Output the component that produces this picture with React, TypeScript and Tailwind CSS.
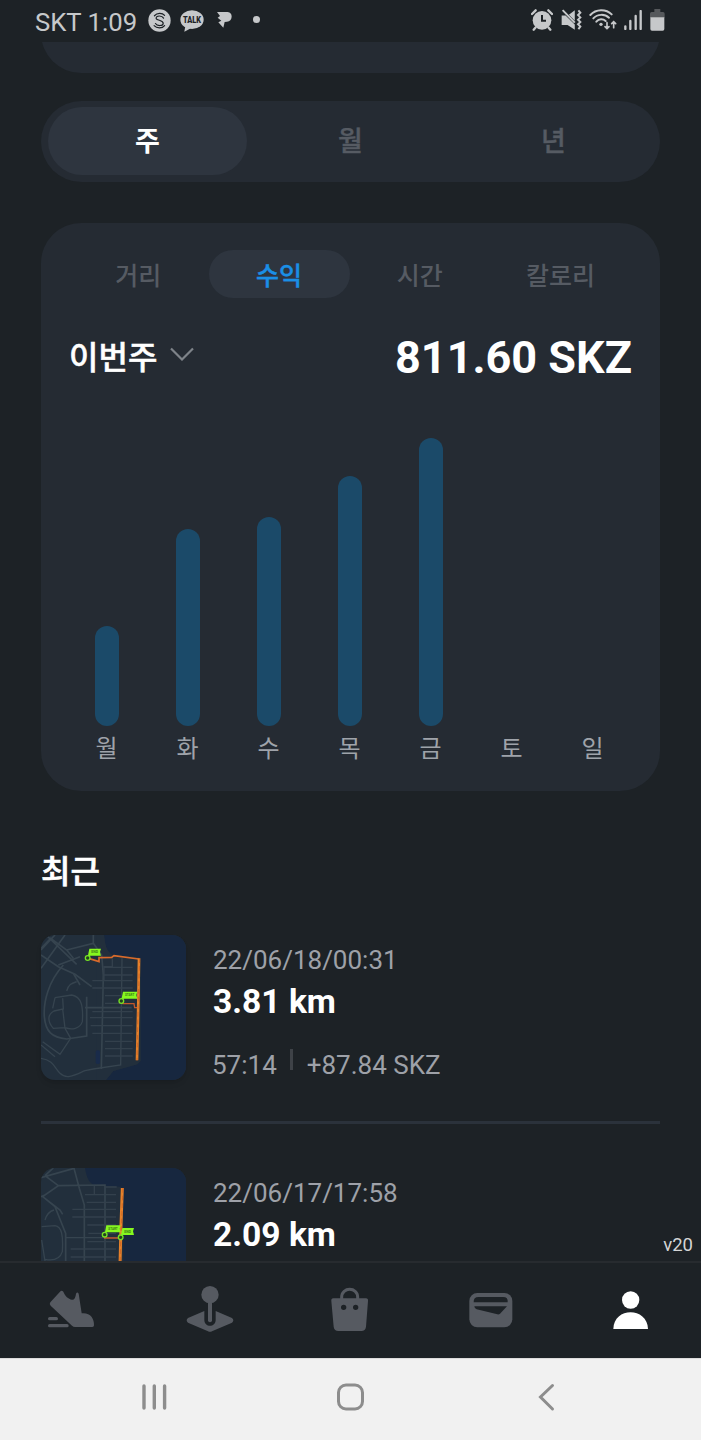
import { useState } from "react";
import type { ReactNode } from "react";

const days = [
  { label: "월", height: 100 },
  { label: "화", height: 197 },
  { label: "수", height: 209 },
  { label: "목", height: 250 },
  { label: "금", height: 288 },
  { label: "토", height: 0 },
  { label: "일", height: 0 },
];

const periods = ["주", "월", "년"];
const metrics = ["거리", "수익", "시간", "칼로리"];

function StatusBar() {
  return (
    <header className="flex h-[42px] shrink-0 items-center justify-between pl-[35px] pr-[36px] text-[#c6c8ca]">
      <div className="flex items-center">
        <span className="w-[113px] whitespace-nowrap pt-[1px] text-[25.7px] leading-[42px]">SKT 1:09</span>
        <svg className="h-[23px] w-[23px] -mt-[1px]" viewBox="0 0 68 68">
          <circle cx="34" cy="34" r="33" fill="#c6c8ca" />
          <g fill="none" stroke="#1d2226" strokeWidth="3.5" strokeLinecap="round">
            <path d="M19 20C27 11 42 11 49 19" />
            <path d="M46 27C42 19 24 18 24 27C24 34 45 33 45 42C45 51 27 51 22 43" />
            <path d="M18 49C26 58 42 58 49 49" />
          </g>
        </svg>
        <svg className="-mt-[1px] ml-[9px] h-[22px] w-[24px]" viewBox="0 0 72 66">
          <ellipse cx="36" cy="29" rx="35" ry="28" fill="#c6c8ca" />
          <path d="M16 48L13 65L34 54Z" fill="#c6c8ca" />
          <text x="36" y="38" fill="#1d2226" fontSize="25" fontWeight="900" textAnchor="middle" textLength="54" lengthAdjust="spacingAndGlyphs">
            TALK
          </text>
        </svg>
        <svg className="-mt-[2px] ml-[13px] h-[16px] w-[15px]" viewBox="0 0 45 48">
          <path d="M0 0H32Q44 2 44 14Q43 27 30 29L23 30L19 47L4 31L13 26L2 17L9 12Z" fill="#c6c8ca" />
        </svg>
        <span className="-mt-[3px] ml-[21px] h-[7px] w-[7px] rounded-full bg-[#c6c8ca]" />
      </div>

      <div className="-mt-[2px] flex items-center">
        {/* alarm */}
        <svg className="h-[22px] w-[22px]" viewBox="543 27 66 66">
          <circle cx="576" cy="61" r="28" fill="#c6c8ca" />
          <path d="M576 45V62H588" fill="none" stroke="#1d2226" strokeWidth="6" />
          <path d="M546 42L557 31M606 42L595 31M556 83L551 89M596 83L601 89" stroke="#c6c8ca" strokeWidth="7" strokeLinecap="round" />
        </svg>
        {/* muted, vibrate */}
        <svg className="ml-[8px] h-[22px] w-[21px]" viewBox="631 27 64 66">
          <path d="M633 46H645L673 74V90L651 75H633Z M655 44L673 30V62Z" fill="#c6c8ca" />
          <path d="M636 30L673 68" stroke="#c6c8ca" strokeWidth="6" />
          <path d="M684 31L690 38L683 45L690 52L683 59L690 66L683 73L690 80L684 88" fill="none" stroke="#c6c8ca" strokeWidth="6" />
        </svg>
        {/* wifi */}
        <svg className="ml-[7px] h-[22px] w-[28px]" viewBox="716 26 84 66">
          <g fill="none" stroke="#c6c8ca" strokeWidth="6" strokeLinecap="round">
            <path d="M720 44C737 25 767 25 784 42" />
            <path d="M729 54C742 40 764 41 776 52" />
            <path d="M738 64C746 55 758 55 766 62" />
            <path d="M770 67V84M764 79L770 85L776 79M790 82V64M784 70L790 64L796 70" strokeWidth="5" />
          </g>
          <circle cx="752" cy="72" r="5" fill="#c6c8ca" />
        </svg>
        {/* signal */}
        <svg className="ml-[7px] h-[20px] w-[18px]" viewBox="820 29 54 60">
          <path d="M824 78V86M839 62V86M855 47V86M870 32V86" stroke="#c6c8ca" strokeWidth="7" strokeLinecap="round" />
        </svg>
        {/* battery */}
        <svg className="ml-[8px] h-[22px] w-[15px]" viewBox="899 27 45 66">
          <path d="M912 27H930V36H938Q943 36 943 41V53H899V41Q899 36 904 36H912Z" fill="#56595c" />
          <path d="M900 52H942V87Q942 92 937 92H905Q900 92 900 87Z" fill="#c6c8ca" />
        </svg>
      </div>
    </header>
  );
}

function Flag({ x, y, text }: { x: number; y: number; text: string }) {
  const width = text === "START" ? 46 : 38;
  return (
    <g>
      <path d={`M${x - 2} ${y + 24}L${x + 3} ${y - 1}H${x + width}L${x + width - 3} ${y + 9}L${x + width} ${y + 20}H${x + 6}Z`} fill="#86f81f" />
      <circle cx={x - 2} cy={y + 27} r="7" fill="#23411f" stroke="#76e224" strokeWidth="4" />
      <text x={x + 9} y={y + 13} fontSize="10" fontWeight="700" fill="#3c7a16" textLength={width - 18} lengthAdjust="spacingAndGlyphs">
        {text}
      </text>
    </g>
  );
}

function LongRouteMap() {
  return (
    <svg className="h-[145px] w-[145px] shrink-0 rounded-[14px] shadow-md" viewBox="33 30 435 435">
      <rect x="33" y="30" width="435" height="435" fill="#222f3c" />
      <path d="M222 30C226 60 228 78 248 90L326 97L332 110V408L322 418L250 438L228 465H468V30Z" fill="#17273f" />
      <path d="M222 30C226 60 228 78 248 90L326 97L332 110V408L322 418L250 438L228 465H200V30Z" fill="#222f3c" />
      <rect x="197" y="376" width="13" height="41" rx="5" fill="#192b4a" />
      <g fill="none" stroke="#36444f" strokeWidth="5">
        <path d="M33 70L62 40L110 75L130 100M33 90L85 125L135 148L185 185M105 30L33 130M75 30L33 75M48 30L140 118M110 75L190 55V30M190 55L215 90L220 150L214 432M85 120L150 95" />
        <path d="M100 120C55 170 40 230 43 275C47 320 65 338 110 342L170 333V215M130 145L150 180" />
        <path d="M75 218L125 210C155 215 160 245 157 290C150 312 125 315 105 308L70 310C52 290 52 268 72 258L100 252L98 220M98 252L105 310L122 340L90 388L38 350M68 250L75 218M110 198C115 178 125 175 140 170M33 360L75 395M33 400C70 405 75 430 90 445C110 465 135 450 165 437L190 432L272 420L276 100" strokeWidth="4" />
        <path d="M165 248H305" />
      </g>
      <path d="M222 127H308M222 150H308M187 167H308M187 189H308M225 212H308M225 235H290M187 260H308M180 278H308M182 302H308M187 325H308M225 349H308M225 371H308M225 393H308M247 100V125H222V165" fill="none" stroke="#33404c" strokeWidth="4" />
      <path d="M178 101L207 110V98L245 97L252 92L326 102" fill="none" stroke="#d96a2b" strokeWidth="5" />
      <path d="M275 232L278 236H312L314 248H324" fill="none" stroke="#c2572b" strokeWidth="4" />
      <path d="M327 100L325 230L321 406" fill="none" stroke="#e5812b" strokeWidth="8" />
      <path d="M329 100L324 260L321 406" fill="none" stroke="#c75c22" strokeWidth="2" strokeDasharray="14 9" />
      <Flag x={175} y={72} text="END" />
      <Flag x={276} y={201} text="START" />
    </svg>
  );
}

function ShortRouteMap() {
  return (
    <svg className="h-[145px] w-[145px] shrink-0 rounded-[14px]" viewBox="33 39 435 435">
      <rect x="33" y="39" width="435" height="435" fill="#222f3c" />
      <path d="M165 39C170 70 178 85 195 91L272 95L280 110V474H468V39Z" fill="#17273f" />
      <g fill="none" stroke="#36444f" strokeWidth="5">
        <path d="M45 62L85 92L38 125L75 155L107 235V318M33 68L132 40L148 100L163 150V430M85 92L225 90V430M45 62L70 39M38 125L90 165L98 178M33 125L45 120" />
        <path d="M107 248H270M35 215L75 212C95 215 100 240 97 290C90 312 70 318 45 313M45 195C50 178 60 168 72 165M35 255L45 318" strokeWidth="4" />
      </g>
      <path d="M165 119H258M170 142H258M127 163H258M127 186H258M172 210H258M175 235H258M122 282H258M122 306H258M172 260H258M193 92V118M225 96H260" fill="none" stroke="#33404c" strokeWidth="4" />
      <path d="M222 249H270" stroke="#c2572b" strokeWidth="5" />
      <path d="M277 99L273 210L270 330" fill="none" stroke="#e5812b" strokeWidth="9" />
      <path d="M279 99L273 240L270 330" fill="none" stroke="#c75c22" strokeWidth="2" strokeDasharray="14 9" />
      <Flag x={226} y={212} text="START" />
      <Flag x={274} y={220} text="END" />
    </svg>
  );
}

interface ActivityProps {
  map: ReactNode;
  date: string;
  distance: string;
  time: string;
  earned: string;
}

function Activity({ map, date, distance, time, earned }: ActivityProps) {
  return (
    <div className="flex h-[145px] gap-[27px]">
      {map}
      <div className="flex flex-col text-[26px] text-[#9ea1a8]">
        <span className="mt-[9px] leading-[32px]">{date}</span>
        <span className="mt-[6px] text-[33.6px] font-bold leading-[40px] text-white">{distance}</span>
        <div className="mt-[27px] -ml-[1px] flex leading-[32px]">
          <span>{time}</span>
          <span className="ml-[13px] mr-[14px] h-[21px] w-[3px] bg-[#3e4247]" />
          <span>{earned}</span>
        </div>
      </div>
    </div>
  );
}

function TabBar() {
  return (
    <nav className="grid h-[97px] shrink-0 grid-cols-5 items-center justify-items-center border-t-2 border-[#272b2f] bg-[#1d2226] pb-[2px] text-[#565a61]">
      <svg className="h-[50px] w-[50px]" viewBox="135 90 150 150" fill="currentColor">
        <path d="M180 110Q185 105 190 110C195 123 205 132 216 134Q226 135 228 116Q232 109 236 116L245 175C270 172 283 190 282 211Q282 216 277 216H225Q220 216 216 212L152 152Q147 147 151 142Z" />
        <path d="M149 191H169M149 212H201" stroke="currentColor" strokeWidth="10" strokeLinecap="round" />
      </svg>
      <svg className="h-[50px] w-[50px]" viewBox="556 90 150 150" fill="currentColor">
        <path d="M614 168L565 189Q557 196 565 203L625 229Q631 232 637 229L697 203Q705 196 697 189L648 168V195C648 218 614 218 614 195Z" />
        <path d="M631 130V196" stroke="currentColor" strokeWidth="12" strokeLinecap="round" />
        <circle cx="631" cy="119" r="26" />
      </svg>
      <svg className="h-[50px] w-[50px]" viewBox="16 15 150 150" fill="currentColor">
        <path d="M66 58V52C66 20 114 20 114 52V58" fill="none" stroke="currentColor" strokeWidth="9" />
        <path fillRule="evenodd" d="M41 55H139Q146 55 145 63L139 140Q137 153 125 153H56Q44 153 42 140L35 63Q34 55 41 55ZM72 74a8 8 0 1 0 0 16a8 8 0 1 0 0-16ZM108 74a8 8 0 1 0 0 16a8 8 0 1 0 0-16Z" />
      </svg>
      <svg className="h-[50px] w-[50px]" viewBox="344 195 150 150">
        <rect x="354" y="219" width="129" height="103" rx="24" fill="currentColor" />
        <path d="M367 247Q366 231 382 231H455Q471 231 469 247ZM369 259H467L446 281Q443 284 438 283L376 268Q369 265 369 259Z" fill="#1d2226" />
      </svg>
      <svg className="h-[50px] w-[50px]" viewBox="765 195 150 150" fill="#ffffff">
        <circle cx="839" cy="240" r="26" />
        <path d="M787 327C788 260 889 260 891 327Z" />
      </svg>
    </nav>
  );
}

function SystemNav() {
  return (
    <div className="flex h-[82px] shrink-0 items-center justify-between border-t border-[#dcdcdc] bg-[#f1f1f1] px-[139px] pb-[6px]">
      <svg className="h-[30px] w-[30px]" viewBox="0 0 30 30" stroke="#8d8d8d" strokeWidth="3.4" strokeLinecap="round">
        <path d="M5 4V26M15.3 4V26M25.6 4V26" />
      </svg>
      <svg className="h-[30px] w-[30px]" viewBox="0.5 0 30 30" fill="none" stroke="#8d8d8d" strokeWidth="3">
        <rect x="3" y="3" width="24" height="24" rx="7.5" />
      </svg>
      <svg className="h-[30px] w-[30px]" viewBox="0 0 30 30" fill="none" stroke="#8d8d8d" strokeWidth="3" strokeLinecap="round" strokeLinejoin="miter">
        <path d="M20.5 3.5L8.5 15L20.5 27" />
      </svg>
    </div>
  );
}

export default function App() {
  const [period, setPeriod] = useState("주");
  const [metric, setMetric] = useState("수익");

  return (
    <div className="flex h-[1440px] w-[701px] flex-col overflow-hidden bg-[#1d2226] font-[Roboto,'Noto_Sans_CJK_KR',sans-serif]">
      <StatusBar />

      <main className="relative min-h-0 flex-1 overflow-hidden px-[41px]">
        <div className="-mt-[49px] h-[80px] rounded-[40px] bg-[#252b33]" />

        {/* Period */}
        <div className="mt-[28px] flex h-[81px] justify-between rounded-full bg-[#252b33] p-[7px] pt-[6px]">
          {periods.map((p) => (
            <button
              key={p}
              onClick={() => setPeriod(p)}
              className={`w-[199px] rounded-full pt-[3px] text-[27px] ${
                period === p ? "bg-[#2e353f] font-bold text-white" : "font-medium text-[#565b63] [-webkit-text-stroke:0.4px]"
              }`}
            >
              {p}
            </button>
          ))}
        </div>

        {/* Chart */}
        <section className="mt-[41px] flex h-[568px] flex-col rounded-[40px] bg-[#252b33] px-[27px] pt-[27px]">
          <div className="mr-[2px] grid h-[48px] shrink-0 grid-cols-4">
            {metrics.map((m) => (
              <button
                key={m}
                onClick={() => setMetric(m)}
                className={`rounded-full pt-[6px] text-[25px] font-medium ${
                  metric === m ? "bg-[#2e353f] text-[#1a8fe6] [-webkit-text-stroke:0.4px]" : "text-[#565b63]"
                }`}
              >
                {m}
              </button>
            ))}
          </div>

          <div className="mt-[31px] flex h-[58px] items-center justify-between pl-[1px]">
            <div className="flex items-center gap-[13px]">
              <span className="text-[32px] font-medium text-white [-webkit-text-stroke:0.5px]">이번주</span>
              <svg className="-mt-[8px] h-[14px] w-[24px]" viewBox="0 0 24 14" fill="none" stroke="#7e8389" strokeWidth="2.2">
                <path d="M1 1.5L12 12.5L23 1.5" />
              </svg>
            </div>
            <span className="mr-[1px] text-[45px] font-bold text-white">811.60 SKZ</span>
          </div>

          <div className="-ml-[2px] mt-[51px] grid grid-cols-7">
            {days.map((d) => (
              <div key={d.label} className="flex flex-col items-center">
                <div className="flex h-[288px] items-end">
                  <div className="w-[24px] rounded-full bg-[#1b4a69]" style={{ height: d.height }} />
                </div>
                <span className="mt-[6px] text-[24px] leading-[34px] text-[#9fa3aa]">{d.label}</span>
              </div>
            ))}
          </div>
        </section>

        {/* Recent */}
        <h2 className="mt-[57px] h-[48px] text-[32px] font-medium leading-[48px] text-white [-webkit-text-stroke:0.6px]">최근</h2>
        <div className="mt-[39px]">
          <Activity map={<LongRouteMap />} date="22/06/18/00:31" distance="3.81 km" time="57:14" earned="+87.84 SKZ" />
          <div className="mb-[44px] mt-[41px] h-[3px] bg-[#2b323b]" />
          <Activity map={<ShortRouteMap />} date="22/06/17/17:58" distance="2.09 km" time="" earned="" />
        </div>

        <span className="absolute bottom-[4px] right-[8px] text-[18.5px] leading-[24px] text-[#d4d5d6]">v20</span>
      </main>

      <TabBar />
      <SystemNav />
    </div>
  );
}
